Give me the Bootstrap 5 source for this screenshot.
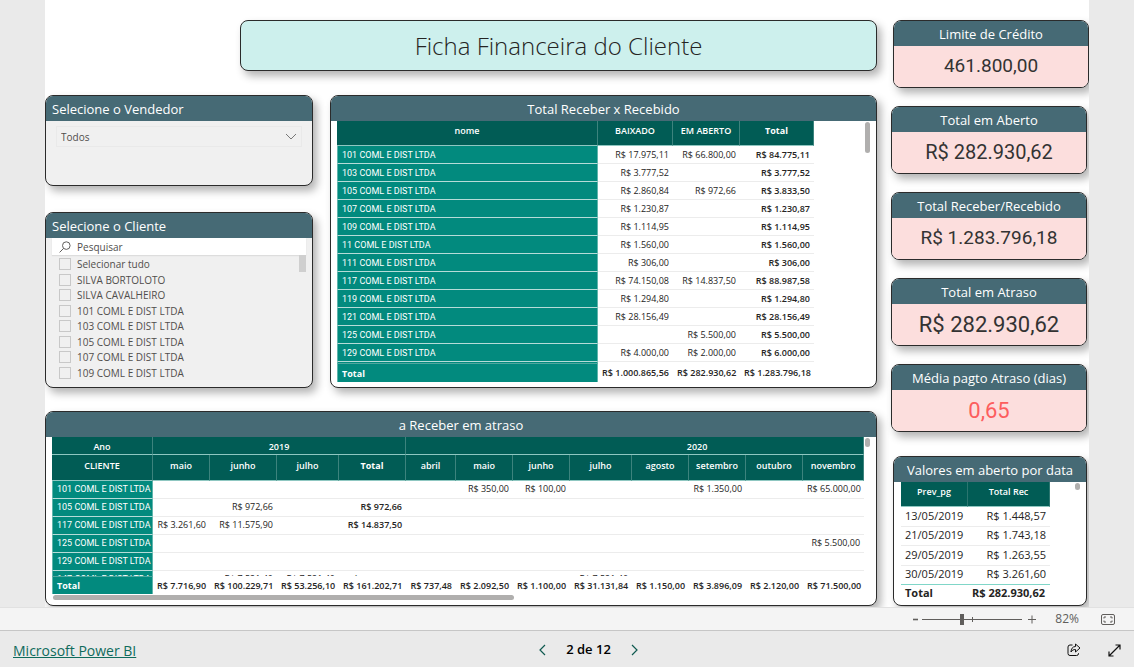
<!DOCTYPE html>
<html lang="pt-BR">
<head>
<meta charset="utf-8">
<meta name="viewport" content="width=device-width, initial-scale=1">
<title>Ficha Financeira do Cliente</title>
<link rel="stylesheet" href="https://cdn.jsdelivr.net/npm/bootstrap@5.3.0/dist/css/bootstrap.min.css">
<style>
  body { font-family: "Open Sans", "Noto Sans", sans-serif; background: #eaeaea; color: #252423; }
  .report-stage { padding: 0 45px; }
  .report-sheet { background: #fff; overflow: hidden; padding: 20px 0 1px; gap: 14px; }
  .main-area { min-width: 0; }
  .side-area { width: 198px; gap: 18px; }

  .panel { border: 1px solid #2b2b2b; border-radius: 8px; box-shadow: 4px 5px 8px rgba(0,0,0,.3); background: #fff; overflow: hidden; }
  .report-title { margin: 0 0 24px 195px; padding-top: 2px; height: 51px; font-size: 24px; font-weight: 300; background: #cdf0ed; color: #252423; }
  .panel-title { background: #466a75; color: #fff; font-size: 13px; line-height: 24px; height: 25px; font-weight: 400; margin: 0; padding: 1px 6px 0; text-align: center; white-space: nowrap; }
  .slicer { background: #f0f0f0; }
  .slicer .panel-title { text-align: left; }
  .middle-row { gap: 17px; }
  .filter-col { width: 268px; }
  .vendor { height: 91px; margin-bottom: 26px; }
  .client { height: 176px; }
  .vendor-field { margin: 5px 10px; position: relative; }
  .vendor-select { display: block; appearance: none; width: 100%; height: 21px; border: 1px solid #e9e9e9; background: transparent; font-size: 10px; color: #504e4c; padding: 1px 4px 0; border-radius: 0; }
  .vendor-field svg { position: absolute; right: 5px; top: 7px; pointer-events: none; }
  .search-row { background: #fff; margin: 0 6px; height: 17px; padding-left: 7px; gap: 6px; box-shadow: 0 1px 1px #ddd; }
  .search-row input { border: 0; background: transparent; font-size: 10px; line-height: 16px; padding: 0; color: #504e4c; outline: 0; }
  .search-row input::placeholder { color: #504e4c; opacity: 1; }
  .client-list { font-size: 10px; color: #504e4c; padding: 1px 0 0 13px; margin: 0; }
  .client-list li { height: 15px; }
  .client-list li:nth-child(odd) { height: 16px; }
  .client-list label { gap: 6px; line-height: 16px; }
  .client-list input { appearance: none; width: 12px; height: 12px; border: 1px solid #c8c8c8; margin: 0; }
  .list-thumb { width: 7px; height: 17px; background: #cfcfcf; margin-right: 6px; }

  .grid-table { border-collapse: separate; border-spacing: 0; table-layout: fixed; width: 100%; font-size: 9px; line-height: 12px; white-space: nowrap; }
  .grid-table td, .grid-table th { padding: 3px 4px 2px; height: 18px; }
  .grid-table thead th { background: #015c55; color: #fff; font-weight: 600; text-align: center; border-right: 1px solid #3d837d; border-bottom: 1px solid #8fc7c1; padding: 4px 0 1px; }
  .grid-table thead .tall th { height: 25px; padding: 4px 0 8px; }
  .grid-table thead .year-2020 { padding-left: 125px; }
  .grid-table tbody td, .grid-table tfoot td { text-align: right; border-bottom: 1px solid #ececec; }
  .grid-table tbody th, .grid-table tfoot th { background: #028a7e; color: #fff; font-weight: 400; border: 1px solid #5fb5ac; border-top: 0; border-bottom-color: #b6dcd8; text-align: left; }
  .grid-table tbody th { font-family: Roboto, sans-serif; }
  .grid-table tfoot td, .grid-table tfoot th { position: sticky; bottom: 0; font-weight: 600; height: 19px; border-bottom: 0; }
  .grid-table tfoot th { border-top: 1px solid #4fa79e; font-weight: 700; }
  .grid-table tfoot td { background: #fff; }
  .grid-table .sum { font-weight: 700; }
  .grid-table td.sum { font-weight: 600; }
  .grid-wrap { overflow: hidden; min-width: 0; }
  .received { height: 293px; min-width: 0; }
  .received .grid-wrap { height: 261px; margin: 0 51px 0 6px; }
  .received-body .thumb { width: 5px; height: 31px; margin: 1px 6px 0 0; }
  .thumb { background: #b0afae; border-radius: 3px; flex-shrink: 0; }
  .overdue { height: 195px; margin-top: 23px; }
  .overdue .grid-wrap { height: 157px; margin-left: 6px; }
  .overdue thead .tall th { height: 26px; padding: 5px 0 8px; }
  .overdue tbody td, .overdue tbody th { padding: 2px 4px 3px; }
  .overdue tfoot td, .overdue tfoot th { height: 18px; }
  .overdue-body .thumb { width: 5px; height: 9px; margin: 1px 6px 0 1px; }
  .overdue .hbar { height: 5px; margin: 1px 14px 0 7px; }
  .overdue .hbar .thumb { width: 57%; height: 5px; }

  .kpi { width: 196px; }
  .kpi-value { background: #fcdedd; height: 41px; line-height: 41px; text-align: center; color: #333; font-family: Roboto, sans-serif; font-size: 20px; }
  .kpi-value.compact { font-size: 19px; line-height: 40px; }
  .kpi-value.large { font-size: 22px; }
  .kpi-value.alert-red { color: #fd5d5d; }
  .dates { width: 194px; height: 150px; margin-left: 2px; }
  .date-grid { width: 149px; margin-left: 7px; font-size: 11px; line-height: 14px; white-space: nowrap; border-collapse: separate; border-spacing: 0; table-layout: fixed; }
  .date-grid thead th { background: #015c55; color: #fff; font-size: 9px; font-weight: 600; line-height: 12px; text-align: center; height: 25px; padding: 4px 0 8px; border-right: 1px solid #2b756f; border-bottom: 1px solid #8fc7c1; }
  .date-grid td, .date-grid tfoot th { padding: 1px 4px 3px; }
  .date-grid tbody td { height: 19px; border-bottom: 1px solid #ececec; }
  .date-grid tbody tr:nth-child(odd) td { height: 20px; }
  .date-grid td + td { text-align: right; }
  .date-grid tbody tr:last-child td { border-bottom-color: #80d6c8; }
  .date-grid tfoot td, .date-grid tfoot th { font-weight: 700; }
  .dates .thumb { width: 5px; height: 7px; margin: 1px 6px 0 0; }

  .zoom-strip { background: #f4f4f4; border-top: 1px solid #e1e1e1; border-bottom: 1px solid #c6c6c6; height: 24px; padding-right: 19px; color: #605e5c; font-size: 12px; }
  .flat-btn { border: 0; background: none; padding: 0; line-height: 14px; color: inherit; display: flex; align-items: center; justify-content: center; }
  .zoom-range { position: relative; width: 100px; height: 14px; margin: 0 6px 0 4px; }
  .zoom-range::after { content: ""; position: absolute; left: 50%; top: 5px; width: 1px; height: 5px; background: #605e5c; }
  .zoom-range input { appearance: none; display: block; width: 100%; height: 14px; margin: 0; background: linear-gradient(#605e5c, #605e5c) center / 100% 1px no-repeat; }
  .zoom-range input::-webkit-slider-thumb { appearance: none; width: 4px; height: 11px; background: #605e5c; }
  .zoom-pct { margin: 0 22px 0 19px; font-size: 12px; }
  .embed-footer { height: 36px; padding: 2px 13px 0; font-size: 14px; }
  .embed-footer .side-cell { flex: 1 1 0; }
  .embed-footer a { color: #0f6b5c; }
  .page-nav { gap: 20px; color: #000; font-weight: 600; font-size: 13px; margin-right: -43px; }
  .view-actions { gap: 27px; }
</style>
</head>
<body class="d-flex flex-column min-vh-100">
<main class="report-stage flex-grow-1 d-flex">
  <div class="report-sheet d-flex flex-grow-1">
    <div class="main-area flex-grow-1">
      <h1 class="panel report-title d-flex align-items-center justify-content-center">Ficha Financeira do Cliente</h1>

      <div class="middle-row d-flex">
        <div class="filter-col flex-shrink-0">
          <section class="panel slicer vendor">
            <h2 class="panel-title"><label for="vendedor">Selecione o Vendedor</label></h2>
            <div class="vendor-field">
              <select id="vendedor" class="vendor-select"><option>Todos</option></select>
              <svg width="12" height="8" viewBox="0 0 12 8" fill="none" stroke="#777" aria-hidden="true"><path d="M1 1l5 5 5-5"/></svg>
            </div>
          </section>
          <section class="panel slicer client">
            <h2 class="panel-title">Selecione o Cliente</h2>
            <div class="search-row d-flex align-items-center">
              <svg width="12" height="12" viewBox="0 0 12 12" fill="none" stroke="#605e5c" aria-hidden="true"><circle cx="7.3" cy="4.6" r="3.8"/><path d="M4.6 7.4L.6 11.4"/></svg>
              <input type="search" placeholder="Pesquisar" aria-label="Pesquisar">
            </div>
            <div class="d-flex justify-content-between align-items-start">
              <ul class="client-list list-unstyled">
                <li><label class="d-flex align-items-center"><input type="checkbox">Selecionar tudo</label></li>
                <li><label class="d-flex align-items-center"><input type="checkbox">SILVA BORTOLOTO</label></li>
                <li><label class="d-flex align-items-center"><input type="checkbox">SILVA CAVALHEIRO</label></li>
                <li><label class="d-flex align-items-center"><input type="checkbox">101 COML E DIST LTDA</label></li>
                <li><label class="d-flex align-items-center"><input type="checkbox">103 COML E DIST LTDA</label></li>
                <li><label class="d-flex align-items-center"><input type="checkbox">105 COML E DIST LTDA</label></li>
                <li><label class="d-flex align-items-center"><input type="checkbox">107 COML E DIST LTDA</label></li>
                <li><label class="d-flex align-items-center"><input type="checkbox">109 COML E DIST LTDA</label></li>
              </ul>
              <div class="list-thumb"></div>
            </div>
          </section>
        </div>

        <section class="panel received flex-grow-1">
          <h2 class="panel-title">Total Receber x Recebido</h2>
          <div class="received-body d-flex">
            <div class="grid-wrap flex-grow-1">
              <table class="grid-table">
                <colgroup><col><col style="width:75px"><col style="width:67px"><col style="width:74px"></colgroup>
                <thead><tr class="tall"><th>nome</th><th>BAIXADO</th><th>EM ABERTO</th><th class="sum">Total</th></tr></thead>
                <tbody>
                  <tr><th>101 COML E DIST LTDA</th><td>R$ 17.975,11</td><td>R$ 66.800,00</td><td class="sum">R$ 84.775,11</td></tr>
                  <tr><th>103 COML E DIST LTDA</th><td>R$ 3.777,52</td><td></td><td class="sum">R$ 3.777,52</td></tr>
                  <tr><th>105 COML E DIST LTDA</th><td>R$ 2.860,84</td><td>R$ 972,66</td><td class="sum">R$ 3.833,50</td></tr>
                  <tr><th>107 COML E DIST LTDA</th><td>R$ 1.230,87</td><td></td><td class="sum">R$ 1.230,87</td></tr>
                  <tr><th>109 COML E DIST LTDA</th><td>R$ 1.114,95</td><td></td><td class="sum">R$ 1.114,95</td></tr>
                  <tr><th>11 COML E DIST LTDA</th><td>R$ 1.560,00</td><td></td><td class="sum">R$ 1.560,00</td></tr>
                  <tr><th>111 COML E DIST LTDA</th><td>R$ 306,00</td><td></td><td class="sum">R$ 306,00</td></tr>
                  <tr><th>117 COML E DIST LTDA</th><td>R$ 74.150,08</td><td>R$ 14.837,50</td><td class="sum">R$ 88.987,58</td></tr>
                  <tr><th>119 COML E DIST LTDA</th><td>R$ 1.294,80</td><td></td><td class="sum">R$ 1.294,80</td></tr>
                  <tr><th>121 COML E DIST LTDA</th><td>R$ 28.156,49</td><td></td><td class="sum">R$ 28.156,49</td></tr>
                  <tr><th>125 COML E DIST LTDA</th><td></td><td>R$ 5.500,00</td><td class="sum">R$ 5.500,00</td></tr>
                  <tr><th>129 COML E DIST LTDA</th><td>R$ 4.000,00</td><td>R$ 2.000,00</td><td class="sum">R$ 6.000,00</td></tr>
                  <tr><th></th><td></td><td></td><td></td></tr>
                </tbody>
                <tfoot><tr><th>Total</th><td>R$ 1.000.865,56</td><td>R$ 282.930,62</td><td>R$ 1.283.796,18</td></tr></tfoot>
              </table>
            </div>
            <div class="thumb"></div>
          </div>
        </section>
      </div>

      <section class="panel overdue">
        <h2 class="panel-title">a Receber em atraso</h2>
        <div class="overdue-body d-flex">
          <div class="grid-wrap flex-grow-1">
            <table class="grid-table">
              <colgroup><col style="width:101px"><col style="width:57px"><col style="width:67px"><col style="width:62px"><col style="width:67px"><col style="width:50px"><col style="width:57px"><col style="width:57px"><col style="width:62px"><col style="width:57px"><col style="width:57px"><col style="width:57px"><col style="width:61px"></colgroup>
              <thead>
                <tr><th>Ano</th><th colspan="4">2019</th><th colspan="8" class="year-2020">2020</th></tr>
                <tr class="tall"><th>CLIENTE</th><th>maio</th><th>junho</th><th>julho</th><th class="sum">Total</th><th>abril</th><th>maio</th><th>junho</th><th>julho</th><th>agosto</th><th>setembro</th><th>outubro</th><th>novembro</th></tr>
              </thead>
              <tbody>
                <tr><th>101 COML E DIST LTDA</th><td></td><td></td><td></td><td></td><td></td><td>R$ 350,00</td><td>R$ 100,00</td><td></td><td></td><td>R$ 1.350,00</td><td></td><td>R$ 65.000,00</td></tr>
                <tr><th>105 COML E DIST LTDA</th><td></td><td>R$ 972,66</td><td></td><td class="sum">R$ 972,66</td><td></td><td></td><td></td><td></td><td></td><td></td><td></td><td></td></tr>
                <tr><th>117 COML E DIST LTDA</th><td>R$ 3.261,60</td><td>R$ 11.575,90</td><td></td><td class="sum">R$ 14.837,50</td><td></td><td></td><td></td><td></td><td></td><td></td><td></td><td></td></tr>
                <tr><th>125 COML E DIST LTDA</th><td></td><td></td><td></td><td></td><td></td><td></td><td></td><td></td><td></td><td></td><td></td><td>R$ 5.500,00</td></tr>
                <tr><th>129 COML E DIST LTDA</th><td></td><td></td><td></td><td></td><td></td><td></td><td></td><td></td><td></td><td></td><td></td><td></td></tr>
                <tr><th>147 COML E DIST LTDA</th><td></td><td>R$ 7.521,40</td><td>R$ 7.521,40</td><td class="sum">R$ 15.042,80</td><td></td><td></td><td></td><td>R$ 7.521,40</td><td></td><td></td><td></td><td></td></tr>
              </tbody>
              <tfoot><tr><th>Total</th><td>R$ 7.716,90</td><td>R$ 100.229,71</td><td>R$ 53.256,10</td><td>R$ 161.202,71</td><td>R$ 737,48</td><td>R$ 2.092,50</td><td>R$ 1.100,00</td><td>R$ 31.131,84</td><td>R$ 1.150,00</td><td>R$ 3.896,09</td><td>R$ 2.120,00</td><td>R$ 71.500,00</td></tr></tfoot>
            </table>
          </div>
          <div class="thumb"></div>
        </div>
        <div class="hbar"><div class="thumb"></div></div>
      </section>
    </div>

    <aside class="side-area d-flex flex-column flex-shrink-0">
      <section class="panel kpi ms-auto"><h2 class="panel-title">Limite de Crédito</h2><div class="kpi-value compact">461.800,00</div></section>
      <section class="panel kpi"><h2 class="panel-title">Total em Aberto</h2><div class="kpi-value">R$ 282.930,62</div></section>
      <section class="panel kpi"><h2 class="panel-title">Total Receber/Recebido</h2><div class="kpi-value compact">R$ 1.283.796,18</div></section>
      <section class="panel kpi"><h2 class="panel-title">Total em Atraso</h2><div class="kpi-value large">R$ 282.930,62</div></section>
      <section class="panel kpi"><h2 class="panel-title">Média pagto Atraso (dias)</h2><div class="kpi-value large alert-red">0,65</div></section>
      <section class="panel dates mt-auto">
        <h2 class="panel-title">Valores em aberto por data</h2>
        <div class="d-flex justify-content-between align-items-start">
          <table class="date-grid">
            <colgroup><col style="width:67px"><col></colgroup>
            <thead><tr><th>Prev_pg</th><th>Total Rec</th></tr></thead>
            <tbody>
              <tr><td>13/05/2019</td><td>R$ 1.448,57</td></tr>
              <tr><td>21/05/2019</td><td>R$ 1.743,18</td></tr>
              <tr><td>29/05/2019</td><td>R$ 1.263,55</td></tr>
              <tr><td>30/05/2019</td><td>R$ 3.261,60</td></tr>
            </tbody>
            <tfoot><tr><th>Total</th><td>R$ 282.930,62</td></tr></tfoot>
          </table>
          <div class="thumb"></div>
        </div>
      </section>
    </aside>
  </div>
</main>

<div class="zoom-strip d-flex align-items-center justify-content-end">
  <button class="flat-btn" aria-label="Reduzir"><svg width="5" height="12" viewBox="0 0 5 12"><path d="M0 6.5h5" stroke="#605e5c" stroke-width="1.6"/></svg></button>
  <div class="zoom-range"><input type="range" min="0" max="100" value="39" aria-label="Zoom"></div>
  <button class="flat-btn" aria-label="Ampliar"><svg width="8" height="12" viewBox="0 0 8 12"><path d="M0 6.5h8M4 2.5v8" stroke="#605e5c"/></svg></button>
  <span class="zoom-pct">82%</span>
  <button class="flat-btn" aria-label="Ajustar à página"><svg width="14" height="11" viewBox="0 0 14 11" fill="none" stroke="#605e5c"><rect x=".5" y=".5" width="13" height="10" rx="1.5"/><path d="M5 3H3v1.5M3 6.5V8h2M9 3h2v1.5M11 6.5V8H9"/></svg></button>
</div>

<footer class="embed-footer d-flex align-items-center">
  <div class="side-cell"><a href="#">Microsoft Power BI</a></div>
  <nav class="page-nav d-flex align-items-center" aria-label="Páginas">
    <button class="flat-btn" aria-label="Página anterior"><svg width="7" height="12" viewBox="0 0 7 12" fill="none" stroke="#0f5a50" stroke-width="1.2"><path d="M6 1L1 6l5 5"/></svg></button>
    <span>2 de 12</span>
    <button class="flat-btn" aria-label="Próxima página"><svg width="7" height="12" viewBox="0 0 7 12" fill="none" stroke="#0f5a50" stroke-width="1.2"><path d="M1 1l5 5-5 5"/></svg></button>
  </nav>
  <div class="side-cell view-actions d-flex justify-content-end">
    <button class="flat-btn" aria-label="Compartilhar"><svg width="14" height="14" viewBox="0 0 14 14" fill="none" stroke="#111"><path d="M5.500 2H3a2 2 0 0 0-2 2v6.500a2 2 0 0 0 2 2h6.500a2 2 0 0 0 2-2V10"/><path d="M8.500 1v2.500C5.500 3.500 4 6 4 9c1-1.800 2.500-2.500 4.500-2.500V9L13 5z"/></svg></button>
    <button class="flat-btn" aria-label="Tela inteira"><svg width="13" height="13" viewBox="0 0 13 13" fill="none" stroke="#111" stroke-width="1.2"><path d="M1 12L12 1M7.500 1H12v4.500M1 7.500V12h4.500"/></svg></button>
  </div>
</footer>
<script src="https://cdn.jsdelivr.net/npm/bootstrap@5.3.0/dist/js/bootstrap.bundle.min.js"></script>
</body>
</html>
